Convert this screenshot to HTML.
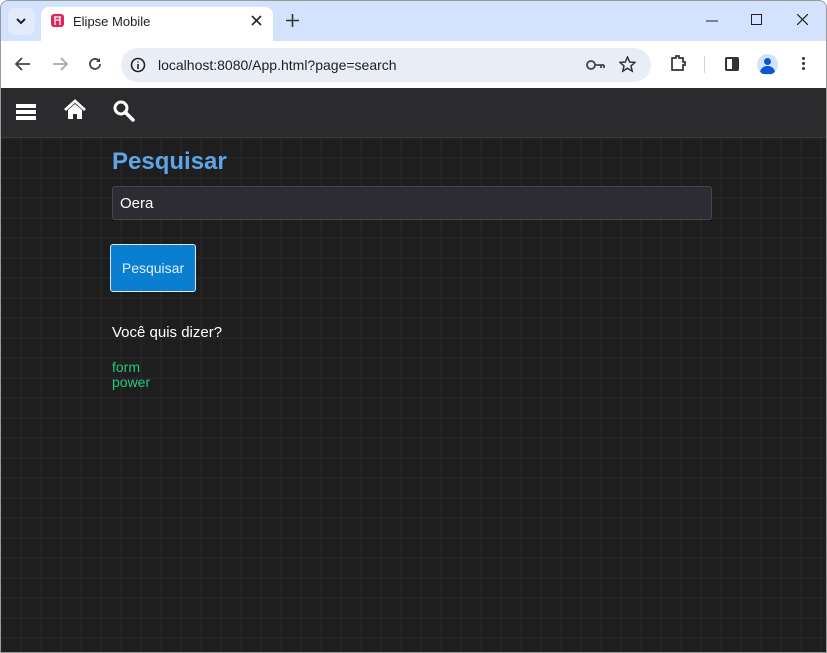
<!DOCTYPE html>
<html><head><meta charset="utf-8"><style>
*{box-sizing:border-box;margin:0;padding:0}
body{width:827px;height:653px;overflow:hidden;font-family:"Liberation Sans",sans-serif;background:#fff;position:relative}
.frame{position:absolute;inset:0;overflow:hidden;border-radius:8px 8px 0 0}
.border{position:absolute;inset:0;border:1px solid #9a9a9a;border-radius:8px 8px 0 0;pointer-events:none}
.tabbar{position:absolute;left:0;top:0;width:827px;height:41px;background:#d3e3fd}
.tab{position:absolute;left:41px;top:7px;width:232px;height:34px;background:#fff;border-radius:8px 8px 0 0}
.toolbar{position:absolute;left:0;top:41px;width:827px;height:47px;background:#fff}
.omni{position:absolute;left:121px;top:7px;width:530px;height:34px;background:#e9eef6;border-radius:17px}
.app{position:absolute;left:0;top:88px;width:827px;height:565px;background-color:#1e1e1e;
background-image:linear-gradient(#242424 2px,transparent 2px),linear-gradient(90deg,#242424 2px,transparent 2px);
background-size:20px 20px;background-position:0 9px}
.nav{position:absolute;left:0;top:0;width:827px;height:50px;background:#2b2b2d;border-bottom:1px solid #3a3a3a}
h1{position:absolute;left:112px;top:60px;font-size:24px;color:#5da5e8;font-weight:bold}
.inp{position:absolute;left:112px;top:98px;width:600px;height:34px;background:#2d2c32;border:1px solid #44444a;border-radius:3px;color:#fff;font-size:15px;padding:8px 7px}
.btn{position:absolute;left:110px;top:156px;width:86px;height:48px;background:#0a7fd1;border:1px solid #d8e8f6;border-radius:3px;color:#e6eef7;font-size:14px;line-height:46px;text-align:center}
.q{position:absolute;left:112px;top:236px;color:#fff;font-size:15px}
.links{position:absolute;left:112px;top:272px;color:#22c97a;font-size:14px;line-height:15px}
.t{position:absolute;font-size:13px;color:#333}
</style></head><body><div class="frame">
<div class="tabbar">
<div style="position:absolute;left:8px;top:8px;width:27px;height:27px;background:#e2ebfb;border-radius:7px"></div>
<svg style="position:absolute;left:15px;top:15px" width="12" height="12" viewBox="0 0 12 12"><path d="M2 4l4 4 4-4" stroke="#222" stroke-width="2" fill="none"/></svg>
<div class="tab">
<div style="position:absolute;left:10px;top:7px;width:13px;height:13px;background:#e0245e;border-radius:3px"></div>
<svg style="position:absolute;left:10px;top:7px" width="13" height="13"><path d="M4 3v8M9 3v8M4 6h5M3 3h7" stroke="#fff" stroke-width="1.3" fill="none"/></svg>
<span class="t" style="left:32px;top:7px;color:#1f1f1f">Elipse Mobile</span>
<svg style="position:absolute;left:210px;top:8px" width="11" height="11"><path d="M1 1l9 9M10 1l-9 9" stroke="#222" stroke-width="1.6"/></svg>
</div>
<svg style="position:absolute;left:286px;top:14px" width="13" height="13"><path d="M6.5 0v13M0 6.5h13" stroke="#333" stroke-width="1.6"/></svg>
<svg style="position:absolute;left:706px;top:20px" width="12" height="2"><path d="M0 1h12" stroke="#222"/></svg>
<svg style="position:absolute;left:751px;top:14px" width="11" height="11"><rect x=".5" y=".5" width="10" height="10" stroke="#222" fill="none"/></svg>
<svg style="position:absolute;left:797px;top:14px" width="11" height="11"><path d="M0 0l11 11M11 0l-11 11" stroke="#222" stroke-width="1.2"/></svg>
</div>
<div class="toolbar">
<svg style="position:absolute;left:15px;top:16px" width="16" height="14"><path d="M15 7H2M7 1L1 7l6 6" stroke="#444" stroke-width="1.8" fill="none"/></svg>
<svg style="position:absolute;left:52px;top:16px" width="16" height="14"><path d="M1 7h13M9 1l6 6-6 6" stroke="#aaa" stroke-width="1.8" fill="none"/></svg>
<svg style="position:absolute;left:87px;top:15px" width="16" height="16"><path d="M13 8a5 5 0 1 1-1.5-3.6" stroke="#444" stroke-width="1.8" fill="none"/><path d="M13 2v4h-4z" fill="#444"/></svg>
<div class="omni">
<svg style="position:absolute;left:9px;top:9px" width="16" height="16"><circle cx="8" cy="8" r="6.5" stroke="#222" stroke-width="1.6" fill="none"/><path d="M8 7v5M8 4.5v1" stroke="#222" stroke-width="1.6"/></svg>
<span class="t" style="left:37px;top:9px;font-size:14px;color:#1f1f1f">localhost:8080/App.html?page=search</span>
<svg style="position:absolute;left:465px;top:11px" width="20" height="12"><circle cx="5" cy="6" r="4" stroke="#444" stroke-width="1.8" fill="none"/><path d="M9 6h9M15 6v3M18 6v3" stroke="#444" stroke-width="1.8"/></svg>
<svg style="position:absolute;left:498px;top:8px" width="17" height="17"><path d="M8.5 1l2.2 5 5.3.4-4 3.5 1.2 5.2-4.7-2.8-4.7 2.8 1.2-5.2-4-3.5 5.3-.4z" stroke="#333" stroke-width="1.5" fill="none"/></svg>
</div>
<svg style="position:absolute;left:669px;top:13px" width="18" height="18"><path d="M3 4h4V2h3v2h4v4h2v3h-2v5H3z" stroke="#333" stroke-width="1.7" fill="none"/></svg>
<div style="position:absolute;left:704px;top:15px;width:1px;height:17px;background:#c5d6f3"></div>
<div style="position:absolute;left:725px;top:16px;width:14px;height:14px;border:2px solid #333;border-radius:2px"><div style="position:absolute;right:0;top:0;width:5px;height:10px;background:#333"></div></div>
<div style="position:absolute;left:757px;top:13px;width:21px;height:21px;border-radius:50%;background:#d3e3fd;overflow:hidden"><div style="position:absolute;left:7px;top:4px;width:7px;height:7px;border-radius:50%;background:#0b57d0"></div><div style="position:absolute;left:3px;top:12px;width:15px;height:8px;border-radius:7px 7px 0 0;background:#0b57d0"></div></div>
<div style="position:absolute;left:802px;top:16px;width:3px;height:3px;background:#333;border-radius:50%;box-shadow:0 5px #333,0 10px #333"></div>
</div>
<div class="app">
<div class="nav">
<div style="position:absolute;left:16px;top:16px;width:20px;height:4px;background:#fff;box-shadow:0 6px #fff,0 12px #fff"></div>
<svg style="position:absolute;left:64px;top:11px" width="22" height="22" viewBox="0 0 22 22"><path d="M1 11L11 2l10 9" stroke="#fff" stroke-width="2.8" fill="none"/><path d="M4 11v9h5v-5h4v5h5v-9l-7-6z" fill="#fff"/></svg>
<svg style="position:absolute;left:112px;top:11px" width="24" height="24"><circle cx="9" cy="9" r="6" stroke="#fff" stroke-width="3" fill="none"/><path d="M13 13l8 8" stroke="#fff" stroke-width="3.5" stroke-linecap="round"/></svg>
</div>
<h1>Pesquisar</h1>
<div class="inp">Oera</div>
<div class="btn">Pesquisar</div>
<div class="q">Você quis dizer?</div>
<div class="links">form<br>power</div>
</div>
<div class="border"></div>
</div></body></html>
